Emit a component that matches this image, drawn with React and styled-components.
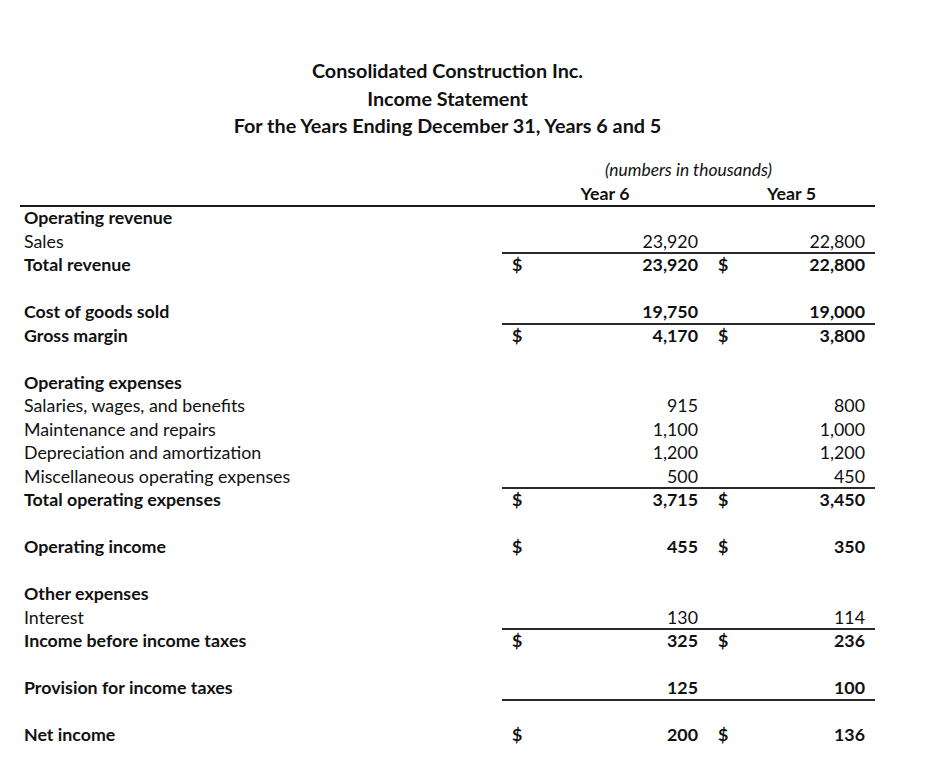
import React from 'react';
import styled, { createGlobalStyle } from 'styled-components';

const GlobalStyle = createGlobalStyle`
  html, body {
    margin: 0;
    padding: 0;
    background: #fff;
  }
  body {
    font-family: "Lato", "Open Sans", sans-serif;
    color: #111;
  }
`;

const rows = [
  { label: 'Operating revenue', bold: true },
  { label: 'Sales', y6: '23,920', y5: '22,800', rule: true },
  { label: 'Total revenue', bold: true, dollar: true, y6: '23,920', y5: '22,800' },
  {},
  { label: 'Cost of goods sold', bold: true, y6: '19,750', y5: '19,000', rule: true },
  { label: 'Gross margin', bold: true, dollar: true, y6: '4,170', y5: '3,800' },
  {},
  { label: 'Operating expenses', bold: true },
  { label: 'Salaries, wages, and benefits', y6: '915', y5: '800' },
  { label: 'Maintenance and repairs', y6: '1,100', y5: '1,000' },
  { label: 'Depreciation and amortization', y6: '1,200', y5: '1,200' },
  { label: 'Miscellaneous operating expenses', y6: '500', y5: '450', rule: true },
  { label: 'Total operating expenses', bold: true, dollar: true, y6: '3,715', y5: '3,450' },
  {},
  { label: 'Operating income', bold: true, dollar: true, y6: '455', y5: '350' },
  {},
  { label: 'Other expenses', bold: true },
  { label: 'Interest', y6: '130', y5: '114', rule: true },
  { label: 'Income before income taxes', bold: true, dollar: true, y6: '325', y5: '236' },
  {},
  { label: 'Provision for income taxes', bold: true, y6: '125', y5: '100', rule: true },
  {},
  { label: 'Net income', bold: true, dollar: true, y6: '200', y5: '136' },
];

const Sheet = styled.div`
  width: 855px;
  margin-left: 20px;
  padding-top: 57px;
  font-size: 17.8px;
`;

const Title = styled.div`
  text-align: center;
  font-weight: 700;
  font-size: 19.8px;
  line-height: 27.5px;
`;

const HeaderBlock = styled.div`
  margin-top: 18.5px;
`;

const Grid = styled.div`
  display: grid;
  grid-template-columns: 482px 206px 167px;
  height: 23.5px;
  line-height: 23.5px;
`;

const Note = styled.div`
  grid-column: 2 / 4;
  text-align: center;
  font-style: italic;
  font-size: 17.4px;
`;

const YearHead = styled.div`
  text-align: center;
  font-weight: 700;
`;

const HeadRule = styled.div`
  height: 2px;
  background: #1a1a1a;
`;

const Label = styled.div`
  padding-left: 4px;
  font-weight: ${p => (p.$bold ? 700 : 400)};
  white-space: nowrap;
  transform: translateY(-1px);
`;

const Amount = styled.div`
  display: flex;
  justify-content: space-between;
  padding: 0 ${p => p.$pad}px;
  font-weight: ${p => (p.$bold ? 700 : 400)};
  box-shadow: ${p => (p.$rule ? 'inset 0 -2px 0 #2a2a2a' : 'none')};

  & > span {
    transform: translateY(-1px);
  }
`;

const Dollar = styled.span`
  font-weight: 700;
`;

function Row({ row }) {
  return (
    <Grid>
      <Label $bold={row.bold}>{row.label || '\u00a0'}</Label>
      <Amount $pad={10} $bold={row.bold} $rule={row.rule}>
        <Dollar>{row.dollar ? '$' : ''}</Dollar>
        <span>{row.y6}</span>
      </Amount>
      <Amount $pad={10} $bold={row.bold} $rule={row.rule}>
        <Dollar>{row.dollar ? '$' : ''}</Dollar>
        <span>{row.y5}</span>
      </Amount>
    </Grid>
  );
}

export default function App() {
  return (
    <>
      <GlobalStyle />
      <Sheet>
        <Title>
          <div>Consolidated Construction Inc.</div>
          <div>Income Statement</div>
          <div>For the Years Ending December 31, Years 6 and 5</div>
        </Title>
        <HeaderBlock>
          <Grid>
            <div />
            <Note>(numbers in thousands)</Note>
          </Grid>
          <Grid>
            <div />
            <YearHead>Year 6</YearHead>
            <YearHead>Year 5</YearHead>
          </Grid>
          <HeadRule />
        </HeaderBlock>
        {rows.map((row, i) => (
          <Row key={i} row={row} />
        ))}
      </Sheet>
    </>
  );
}
